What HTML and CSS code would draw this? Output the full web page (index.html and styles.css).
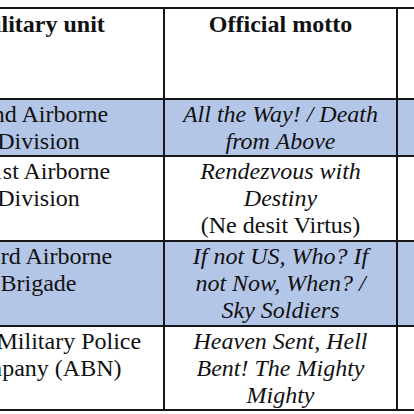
FILE: index.html
```html
<!DOCTYPE html>
<html>
<head>
<meta charset="utf-8">
<link rel="stylesheet" href="styles.css">
</head>
<body>
<div class="wrap">
<table class="mottos">
  <colgroup>
    <col class="c-unit">
    <col class="c-motto">
    <col class="c-extra">
  </colgroup>
  <tr class="head">
    <th>Military unit</th>
    <th>Official motto</th>
    <th></th>
  </tr>
  <tr class="r1 blue">
    <td>82nd Airborne<br>Division</td>
    <td><em>All the Way! / Death<br>from Above</em></td>
    <td></td>
  </tr>
  <tr class="r2">
    <td>101st Airborne<br>Division</td>
    <td><em>Rendezvous with<br>Destiny</em><br>(Ne desit Virtus)</td>
    <td></td>
  </tr>
  <tr class="r3 blue">
    <td>173rd Airborne<br>Brigade</td>
    <td><em>If not US, Who? If<br>not Now, When? /<br>Sky Soldiers</em></td>
    <td></td>
  </tr>
  <tr class="r4">
    <td>108th Military Police<br>Company (ABN)</td>
    <td><em>Heaven Sent, Hell<br>Bent! The Mighty<br>Mighty</em></td>
    <td></td>
  </tr>
</table>
</div>
</body>
</html>
```

FILE: styles.css
```css
html, body {
  margin: 0;
  padding: 0;
  background: #ffffff;
  overflow: hidden;
}

.wrap {
  padding-top: 7px;
  margin-left: -88px;
}

.mottos {
  border-collapse: collapse;
  table-layout: fixed;
  width: 680px;
  font-family: "Liberation Serif", "Times New Roman", serif;
  font-size: 24px;
  line-height: 27px;
  color: #111111;
}

.c-unit { width: 251px; }
.c-motto { width: 233px; }
.c-extra { width: 196px; }

.mottos th,
.mottos td {
  border: 2px solid #161616;
  padding: 1px 0 0 0;
  text-align: center;
  vertical-align: top;
}

.mottos th {
  font-weight: bold;
  padding-top: 2px;
}

.head { height: 91px; }
.r1 { height: 56px; }
.r2 { height: 85px; }
.r3 { height: 85px; }
.r4 { height: 84px; }

.blue td { background: #b4c6e7; }

.mottos em { font-style: italic; }
```
